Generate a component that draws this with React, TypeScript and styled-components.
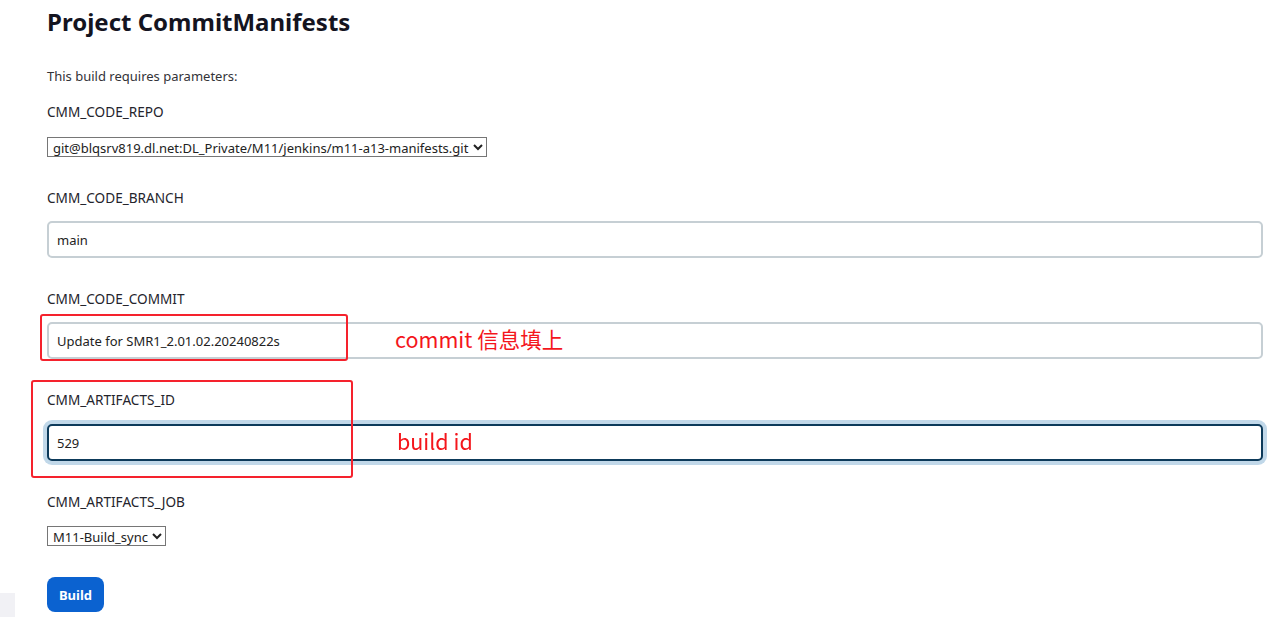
import React from "react";
import styled, { createGlobalStyle } from "styled-components";

const GlobalStyle = createGlobalStyle`
  html, body { margin: 0; padding: 0; background: #ffffff; }
  body { font-family: "Noto Sans", "Open Sans", Arial, sans-serif; color: #1f1f27; }
`;

const Page = styled.div`
  position: relative;
  width: 1272px;
  height: 617px;
  overflow: hidden;
  box-sizing: border-box;
  padding: 6px 9px 0 47px;
  display: flex;
  flex-direction: column;
`;

const Title = styled.h1`
  margin: 0;
  font-size: 24px;
  line-height: 32px;
  font-weight: 700;
  color: #14141f;
`;

const Intro = styled.p`
  margin: 29px 0 18px;
  font-size: 13px;
  line-height: 18px;
  color: #333338;
`;

const Form = styled.form`
  display: flex;
  flex-direction: column;
  gap: 32px;
`;

const Param = styled.div`
  display: flex;
  flex-direction: column;
  align-items: flex-start;
`;

const Label = styled.label<{ $gap?: number }>`
  font-size: 13.6px;
  line-height: 18px;
  color: #24242c;
  margin-bottom: ${(p) => p.$gap ?? 15}px;
`;

const Select = styled.select`
  font-family: "Noto Sans", "Open Sans", Arial, sans-serif;
  font-size: 13px;
  height: 20px;
  padding: 0 1px;
  border: 1px solid #767676;
  border-radius: 0;
  background: #fff;
  color: #222;
`;

const TextInput = styled.input<{ $focused?: boolean }>`
  box-sizing: border-box;
  width: 100%;
  height: 37px;
  padding: 0 8px;
  font-family: "Noto Sans", "Open Sans", Arial, sans-serif;
  font-size: 13px;
  color: #222;
  background: #fff;
  border: 2px solid ${(p) => (p.$focused ? "#0d3a5a" : "#c6cfd4")};
  border-radius: 5px;
  outline: none;
  box-shadow: ${(p) => (p.$focused ? "0 0 0 4px #c1d8e9" : "none")};
  caret-color: #111;
`;

const BuildButton = styled.button`
  margin-top: 31px;
  align-self: flex-start;
  width: 57px;
  height: 35px;
  border: none;
  border-radius: 8px;
  background: #0b62d0;
  color: #fff;
  font-family: "Noto Sans", "Open Sans", Arial, sans-serif;
  font-weight: 700;
  font-size: 13px;
  cursor: pointer;
`;

const Annotation = styled.div<{ $l: number; $t: number; $w: number; $h: number }>`
  position: absolute;
  left: ${(p) => p.$l}px;
  top: ${(p) => p.$t}px;
  width: ${(p) => p.$w}px;
  height: ${(p) => p.$h}px;
  box-sizing: border-box;
  border: 2px solid #f5222d;
  border-radius: 3px;
  pointer-events: none;
`;

const Note = styled.span<{ $l: number; $t: number }>`
  position: absolute;
  left: ${(p) => p.$l}px;
  top: ${(p) => p.$t}px;
  font-family: "Noto Sans CJK SC", "Noto Sans", sans-serif;
  font-size: 21.5px;
  font-weight: 400;
  line-height: 26px;
  color: #f4161c;
  white-space: nowrap;
`;

const SideStub = styled.div`
  position: absolute;
  left: 0;
  bottom: 0;
  width: 15px;
  height: 24px;
  background: #f1f1f5;
`;

export default function App() {
  return (
    <>
      <GlobalStyle />
      <Page>
        <Title>Project CommitManifests</Title>
        <Intro>This build requires parameters:</Intro>
        <Form onSubmit={(e) => e.preventDefault()}>
          <Param>
            <Label $gap={16}>CMM_CODE_REPO</Label>
            <Select defaultValue="repo">
              <option value="repo">git@blqsrv819.dl.net:DL_Private/M11/jenkins/m11-a13-manifests.git</option>
            </Select>
          </Param>
          <Param>
            <Label $gap={14}>CMM_CODE_BRANCH</Label>
            <TextInput defaultValue="main" />
          </Param>
          <Param>
            <Label $gap={14}>CMM_CODE_COMMIT</Label>
            <TextInput defaultValue="Update for SMR1_2.01.02.20240822s" />
          </Param>
          <Param>
            <Label $gap={15}>CMM_ARTIFACTS_ID</Label>
            <TextInput $focused defaultValue="529" autoFocus />
          </Param>
          <Param>
            <Label $gap={15}>CMM_ARTIFACTS_JOB</Label>
            <Select defaultValue="job">
              <option value="job">M11-Build_sync</option>
            </Select>
          </Param>
        </Form>
        <BuildButton type="button">Build</BuildButton>

        <Annotation $l={40} $t={314} $w={308} $h={47} />
        <Note $l={395} $t={326}>commit 信息填上</Note>
        <Annotation $l={31} $t={380} $w={322} $h={98} />
        <Note $l={397} $t={428}>build id</Note>
        <SideStub />
      </Page>
    </>
  );
}
